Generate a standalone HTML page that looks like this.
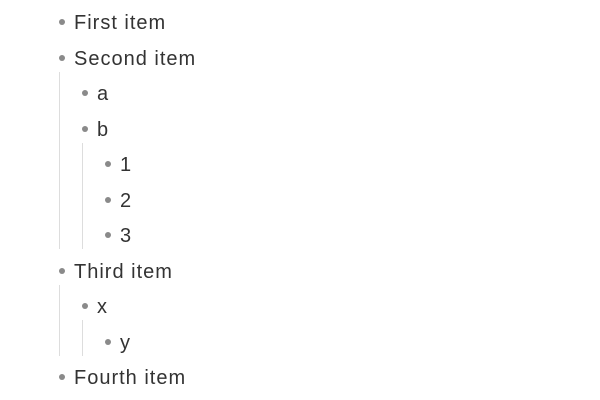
<!DOCTYPE html><html><head><style>
body{margin:0;width:600px;height:400px;background:#fff;position:relative;font-family:"Liberation Sans",sans-serif;color:#333;overflow:hidden}
.i{position:absolute;height:36px;line-height:36px;font-size:20px;letter-spacing:1px;white-space:nowrap}
.i:before{content:"";position:absolute;left:-15px;top:14px;width:6px;height:6px;border-radius:50%;background:#8a8a8a}
.l{position:absolute;width:1px;background:#ddd}
</style></head><body>
<div class="i" style="left:74px;top:5px">First item</div>
<div class="i" style="left:74px;top:41px">Second item</div>
<div class="i" style="left:97px;top:76px">a</div>
<div class="i" style="left:97px;top:112px">b</div>
<div class="i" style="left:120px;top:147px">1</div>
<div class="i" style="left:120px;top:183px">2</div>
<div class="i" style="left:120px;top:218px">3</div>
<div class="i" style="left:74px;top:254px">Third item</div>
<div class="i" style="left:97px;top:289px">x</div>
<div class="i" style="left:120px;top:325px">y</div>
<div class="i" style="left:74px;top:360px">Fourth item</div>
<div class="l" style="left:59px;top:72px;height:177px"></div>
<div class="l" style="left:82px;top:143px;height:106px"></div>
<div class="l" style="left:59px;top:285px;height:71px"></div>
<div class="l" style="left:82px;top:320px;height:36px"></div>
</body></html>
